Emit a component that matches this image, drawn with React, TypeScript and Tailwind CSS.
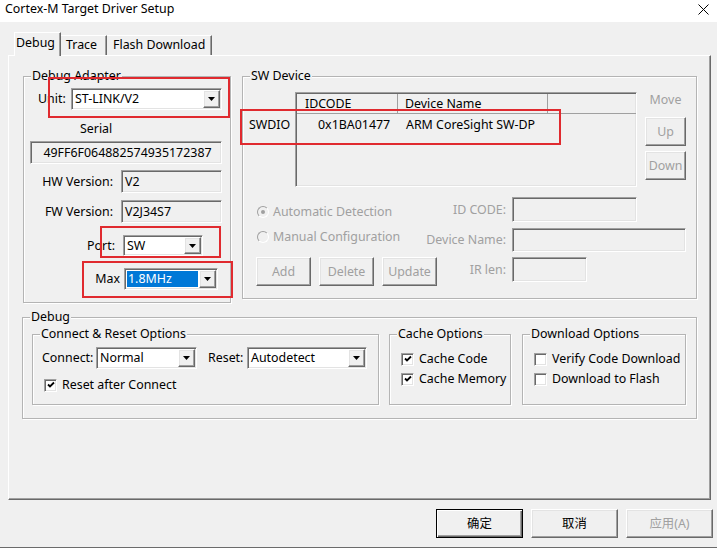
import type { ReactNode } from 'react';

const sunken =
  'border border-t-[#a0a0a0] border-l-[#a0a0a0] border-r-white border-b-white shadow-[inset_1px_1px_0_#696969,inset_-1px_-1px_0_#e3e3e3]';
const raised =
  'border border-t-white border-l-white border-r-[#696969] border-b-[#696969] shadow-[inset_-1px_-1px_0_#a0a0a0,inset_1px_1px_0_#e3e3e3]';

function cn(...parts: (string | false | undefined)[]) {
  return parts.filter(Boolean).join(' ');
}

function Arrow() {
  return (
    <svg width="7" height="4" viewBox="0 0 7 4">
      <path d="M0 0h7L3.5 4z" fill="#000" />
    </svg>
  );
}

function Combo({ value, className, selected }: { value: string; className: string; selected?: boolean }) {
  return (
    <div className={`flex bg-white p-[1px] ${sunken} ${className}`}>
      <div
        className={
          selected
            ? 'flex flex-1 items-center m-[1px] pl-[1px] bg-[#0078d7] text-white'
            : 'flex flex-1 items-center pl-[2px]'
        }
      >
        {value}
      </div>
      <div className={`flex w-[17px] items-center justify-center bg-[#f0f0f0] ${raised}`}>
        <Arrow />
      </div>
    </div>
  );
}

function Field({ value, className }: { value?: string; className: string }) {
  return <div className={`flex items-center bg-[#f0f0f0] pl-[3px] ${sunken} ${className}`}>{value}</div>;
}

function Button({ label, className, disabled, primary }: { label: string; className: string; disabled?: boolean; primary?: boolean }) {
  return (
    <div
      className={cn(
        'flex items-center justify-center bg-[#f0f0f0]',
        primary
          ? 'border border-black shadow-[inset_1px_1px_0_#fff,inset_-1px_-1px_0_#696969,inset_-2px_-2px_0_#a0a0a0]'
          : raised,
        disabled && 'text-[#a0a0a0]',
        className
      )}
    >
      {label}
    </div>
  );
}

function Check({ checked, label }: { checked?: boolean; label: string }) {
  return (
    <div className="flex h-[16px] items-center">
      <div className={`flex h-[13px] w-[13px] shrink-0 items-center justify-center bg-white ${sunken}`}>
        {checked && (
          <svg width="8" height="8" viewBox="0 0 8 8">
            <path d="M1 3.5L3 5.5L7 1.5" stroke="#000" strokeWidth="1.8" fill="none" />
          </svg>
        )}
      </div>
      <span className="ml-[5px] whitespace-nowrap">{label}</span>
    </div>
  );
}

function Radio({ checked, label }: { checked?: boolean; label: string }) {
  return (
    <div className="flex h-[16px] items-center text-[#a0a0a0]">
      <div className="flex h-[12px] w-[12px] items-center justify-center rounded-full border border-t-[#a0a0a0] border-l-[#a0a0a0] border-r-white border-b-white bg-[#f0f0f0]">
        {checked && <div className="h-[4px] w-[4px] rounded-full bg-[#a0a0a0]" />}
      </div>
      <span className="ml-[4px] whitespace-nowrap">{label}</span>
    </div>
  );
}

function Group({ title, className, children }: { title: string; className: string; children?: ReactNode }) {
  return (
    <div className={`relative border border-[#b4b4b4] shadow-[inset_1px_1px_0_#fff,1px_1px_0_#fff] ${className}`}>
      <span className="absolute -top-[9px] left-[7px] whitespace-nowrap bg-[#f0f0f0] px-[1px]">{title}</span>
      {children}
    </div>
  );
}

function Mark({ className }: { className: string }) {
  return <div className={`pointer-events-none absolute border-2 border-[#e02a2f] ${className}`} />;
}

export default function App() {
  return (
    <div className="relative flex h-[550px] w-[717px] flex-col overflow-hidden bg-[#f0f0f0] font-['Noto_Sans','Noto_Sans_CJK_SC',sans-serif] text-[12.4px] leading-[16px] text-black">
      {/* title bar */}
      <div className="flex h-[22px] items-start justify-between bg-white pl-[5px] pr-[8px] pt-[1px]">
        <span>Cortex-M Target Driver Setup</span>
        <svg width="11" height="11" viewBox="0 0 11 11" className="mt-[3px]">
          <path d="M0.5 0.5L10.5 10.5M10.5 0.5L0.5 10.5" stroke="#000" strokeWidth="1" />
        </svg>
      </div>

      {/* tabs */}
      <div className="ml-[8px] mt-[10px] w-[703px]">
        <div className="flex h-[23px] items-end pl-[6px]">
          <div className="relative z-10 -mb-[1px] h-[24px] w-[47px] border-l border-r border-t border-l-white border-r-[#696969] border-t-white bg-[#f0f0f0] pl-[1px] pt-[2px] shadow-[inset_-1px_0_0_#a0a0a0]">
            Debug
          </div>
          <div className="h-[20px] w-[46px] border-r border-t border-r-[#696969] border-t-white pl-[5px] pt-[1px] shadow-[inset_-1px_0_0_#a0a0a0]">
            Trace
          </div>
          <div className="h-[20px] w-[105px] border-r border-t border-r-[#696969] border-t-white pl-[6px] pt-[1px] shadow-[inset_-1px_0_0_#a0a0a0]">
            Flash Download
          </div>
        </div>

        {/* tab page */}
        <div className="flex h-[445px] flex-col border border-b-[#696969] border-l-white border-r-[#696969] border-t-white pl-[13px] shadow-[inset_-1px_-1px_0_#a0a0a0]">
          <div className="mt-[20px] flex items-start">
            <Group title="Debug Adapter" className="ml-[1px] flex h-[227px] w-[208px] flex-col">
              <div className="mt-[11px] flex h-[22px] items-center pl-[14px]">
                <span className="w-[33px]">Unit:</span>
                <Combo value="ST-LINK/V2" className="h-[22px] w-[151px]" />
              </div>
              <div className="mt-[11px] pl-[56px]">Serial</div>
              <Field value="49FF6F064882574935172387" className="ml-[6px] mt-[4px] h-[23px] w-[192px] justify-center pl-0" />
              <div className="mt-[6px] flex h-[23px] items-center">
                <span className="w-[89px] text-right">HW Version:</span>
                <Field value="V2" className="ml-[8px] h-[23px] w-[101px]" />
              </div>
              <div className="mt-[7px] flex h-[23px] items-center">
                <span className="w-[89px] text-right">FW Version:</span>
                <Field value="V2J34S7" className="ml-[8px] h-[23px] w-[101px]" />
              </div>
              <div className="mt-[12px] flex h-[21px] items-center">
                <span className="w-[91px] text-right">Port:</span>
                <Combo value="SW" className="ml-[8px] h-[21px] w-[80px]" />
              </div>
              <div className="mt-[12px] flex h-[22px] items-center">
                <span className="w-[96px] text-right">Max</span>
                <Combo value="1.8MHz" selected className="ml-[4px] h-[22px] w-[94px]" />
              </div>
            </Group>

            <Group title="SW Device" className="ml-[11px] flex h-[223px] w-[455px] flex-col">
              <div className="mt-[15px] flex items-start pl-[6px]">
                <div className="w-[46px] pt-[25px]">SWDIO</div>
                <div className={`flex h-[95px] w-[342px] flex-col bg-[#f0f0f0] pl-[1px] pt-[1px] ${sunken}`}>
                  <div className="flex h-[20px] border-b border-[#a0a0a0]">
                    <div className="w-[101px] border-r border-[#a0a0a0] pl-[8px] pt-[2px]">IDCODE</div>
                    <div className="w-[150px] border-r border-[#a0a0a0] pl-[7px] pt-[2px]">Device Name</div>
                    <div className="flex-1" />
                  </div>
                  <div className="mt-[3px] flex">
                    <div className="w-[101px] pl-[21px]">0x1BA01477</div>
                    <div className="pl-[8px]">ARM CoreSight SW-DP</div>
                  </div>
                </div>
                <div className="ml-[8px] flex w-[41px] flex-col">
                  <div className="text-center text-[#a0a0a0]">Move</div>
                  <Button label="Up" disabled className="mt-[9px] h-[29px] w-[41px]" />
                  <Button label="Down" disabled className="mt-[5px] h-[29px] w-[41px]" />
                </div>
              </div>

              <div className="flex items-start">
                <div className="ml-[13px] flex w-[184px] flex-col">
                  <div className="ml-[1px] mt-[17px]">
                    <Radio checked label="Automatic Detection" />
                  </div>
                  <div className="ml-[1px] mt-[9px]">
                    <Radio label="Manual Configuration" />
                  </div>
                  <div className="mt-[12px] flex gap-[8px]">
                    <Button label="Add" disabled className="h-[29px] w-[55px]" />
                    <Button label="Delete" disabled className="h-[29px] w-[55px]" />
                    <Button label="Update" disabled className="h-[29px] w-[55px]" />
                  </div>
                </div>
                <div className="mt-[10px] flex flex-col text-[#a0a0a0]">
                  <div className="flex h-[25px] items-center">
                    <div className="flex w-[66px] justify-end whitespace-nowrap">ID CODE:</div>
                    <Field className="ml-[6px] h-[25px] w-[125px]" />
                  </div>
                  <div className="mt-[6px] flex h-[24px] items-center">
                    <div className="flex w-[66px] justify-end whitespace-nowrap">Device Name:</div>
                    <Field className="ml-[6px] h-[24px] w-[174px]" />
                  </div>
                  <div className="mt-[5px] flex h-[25px] items-center">
                    <div className="flex w-[66px] justify-end whitespace-nowrap">IR len:</div>
                    <Field className="ml-[6px] h-[25px] w-[75px]" />
                  </div>
                </div>
              </div>
            </Group>
          </div>

          <Group title="Debug" className="mt-[14px] flex h-[102px] w-[675px] items-start pl-[9px] pt-[16px]">
            <Group title="Connect & Reset Options" className="flex h-[71px] w-[347px] flex-col">
              <div className="mt-[12px] flex h-[22px] items-center pl-[9px]">
                <span className="w-[54px]">Connect:</span>
                <Combo value="Normal" className="h-[22px] w-[101px]" />
                <span className="ml-[11px] w-[39px]">Reset:</span>
                <Combo value="Autodetect" className="h-[22px] w-[120px]" />
              </div>
              <div className="mt-[8px] pl-[11px]">
                <Check checked label="Reset after Connect" />
              </div>
            </Group>
            <Group title="Cache Options" className="ml-[10px] flex h-[71px] w-[122px] flex-col pl-[11px]">
              <div className="mt-[16px]">
                <Check checked label="Cache Code" />
              </div>
              <div className="mt-[4px]">
                <Check checked label="Cache Memory" />
              </div>
            </Group>
            <Group title="Download Options" className="ml-[11px] flex h-[71px] w-[164px] flex-col pl-[11px]">
              <div className="w-[147px] overflow-hidden">
                <div className="mt-[16px]">
                  <Check label="Verify Code Download" />
                </div>
                <div className="mt-[4px]">
                  <Check label="Download to Flash" />
                </div>
              </div>
            </Group>
          </Group>
        </div>
      </div>

      {/* dialog buttons */}
      <div className="mt-[9px] flex justify-end gap-[8px] pr-[4px]">
        <Button label="确定" primary className="h-[29px] w-[87px]" />
        <Button label="取消" className="h-[29px] w-[87px]" />
        <Button label="应用(A)" disabled className="h-[29px] w-[87px]" />
      </div>

      <div className="mt-auto h-[3px] border-t border-[#6b6b6b] bg-white" />

      {/* red annotation boxes */}
      <Mark className="left-[48px] top-[77px] h-[41px] w-[182px]" />
      <Mark className="left-[100px] top-[226px] h-[32px] w-[121px]" />
      <Mark className="left-[82px] top-[261px] h-[37px] w-[151px]" />
      <Mark className="left-[240px] top-[109px] h-[36px] w-[321px]" />
    </div>
  );
}
